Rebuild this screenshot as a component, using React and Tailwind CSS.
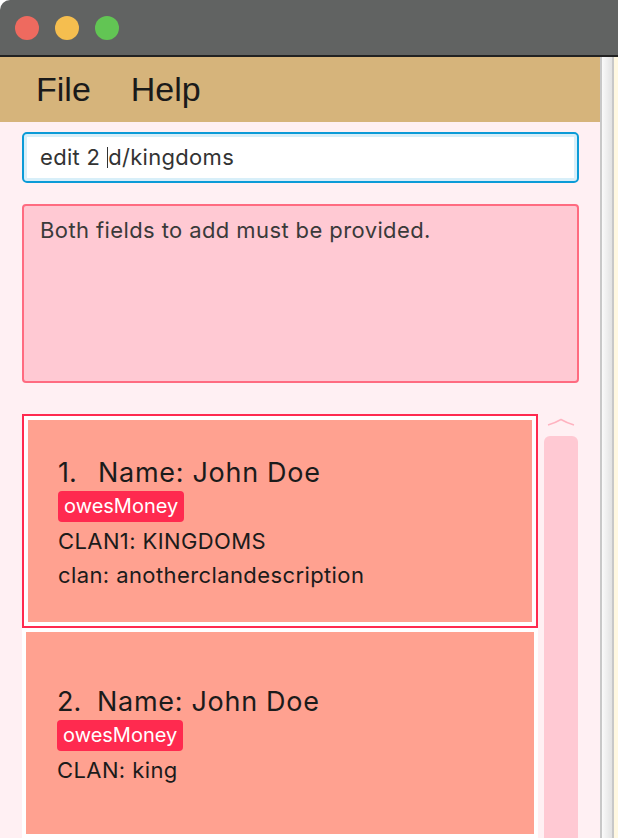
import React from "react";

function Card({ index, name, lines, selected }) {
  const outer = selected
    ? "border-2 border-[#ff2a4f] bg-white p-[4px]"
    : "bg-white p-[4px]";
  const inner = selected
    ? "h-[202px] bg-[#ffa190] flex flex-col justify-center pt-[6px] pl-[30px]"
    : "h-[202px] bg-[#ffa190] flex flex-col justify-center pt-[6px] pl-[31px]";
  return (
    <div className={outer}>
      <div className={inner}>
        <div className="flex text-[27px] leading-[33px] text-[#1b1b1b]">
          <span className="w-[40px]">{index}.</span>
          <span className="tracking-[0.7px]">Name: {name}</span>
        </div>
        <div className="mt-[2px] flex">
          <span className="h-[31px] px-[6px] rounded-[4px] bg-[#ff2a4f] text-white text-[20px] leading-[31px]">
            owesMoney
          </span>
        </div>
        <div className="mt-[2px]">
          {lines.map((l) => (
            <div key={l} className="text-[22px] leading-[34px] tracking-[0.4px] text-[#1b1b1b]">
              {l}
            </div>
          ))}
        </div>
      </div>
    </div>
  );
}

export default function App() {
  return (
    <div className="w-[618px] h-[838px] overflow-hidden bg-white flex flex-col font-['Inter',sans-serif]">
      <div className="h-[57px] shrink-0 bg-[#616362] rounded-tl-[10px] border-b-2 border-[#222222] flex items-center gap-[16px] pl-[15px]">
        <span className="w-[24px] h-[24px] rounded-full bg-[#ee6a5f]" />
        <span className="w-[24px] h-[24px] rounded-full bg-[#f5be4f]" />
        <span className="w-[24px] h-[24px] rounded-full bg-[#62c554]" />
      </div>
      <div className="flex flex-1 min-h-0">
        <div className="w-[600px] shrink-0 bg-[#fff0f3] flex flex-col overflow-hidden">
          <div className="h-[65px] shrink-0 bg-[#d6b47b] flex items-center gap-[40px] pl-[36px] font-['Liberation_Sans',sans-serif] text-[34px] text-[#1a1a1a]">
            <span>File</span>
            <span>Help</span>
          </div>
          <div className="pl-[22px] pr-[21px] pt-[10px] flex flex-col">
            <div className="h-[51px] border-2 border-[#0b9bd7] rounded-[5px] bg-white shadow-[inset_0_0_0_3px_#d8eff9] flex items-center pl-[16px] text-[22px] tracking-[0.3px] text-[#333333] whitespace-pre">
              <span>edit 2 </span>
              <span className="inline-block w-[1.5px] h-[21px] bg-[#333333]" />
              <span>d/kingdoms</span>
            </div>
            <div className="mt-[21px] h-[179px] border-2 border-[#ff6b80] rounded-[4px] bg-[#ffc9d3] pl-[16px] pt-[8px] text-[22px] tracking-[0.4px] text-[#3a3a3a]">
              Both fields to add must be provided.
            </div>
            <div className="mt-[31px] flex">
              <div className="w-[516px] shrink-0 flex flex-col">
                <Card
                  index={1}
                  name="John Doe"
                  selected
                  lines={["CLAN1: KINGDOMS", "clan: anotherclandescription"]}
                />
                <Card index={2} name="John Doe" lines={["CLAN: king"]} />
              </div>
              <div className="ml-[6px] w-[34px] flex flex-col items-center">
                <svg width="28" height="8" viewBox="0 0 28 8" className="mt-[4px]">
                  <path d="M1 7 Q8 5 14 1.5 Q20 5 27 7" fill="none" stroke="#ffb3c0" strokeWidth="1.5" />
                </svg>
                <div className="mt-[10px] w-[34px] h-[420px] rounded-t-[6px] bg-[#ffc9d3]" />
              </div>
            </div>
          </div>
        </div>
        <div className="w-[14px] shrink-0 border-l-2 border-r-2 border-[#c8c8c8] bg-gradient-to-r from-[#fafafa] to-[#e2e2e2]" />
        <div className="flex-1 bg-[#fff8e1]" />
      </div>
    </div>
  );
}
